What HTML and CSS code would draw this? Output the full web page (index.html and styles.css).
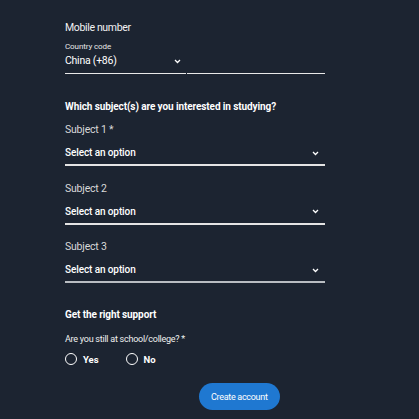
FILE: index.html
```html
<!DOCTYPE html>
<html lang="en">
<head>
    <meta charset="UTF-8">
    <meta name="viewport" content="width=device-width, initial-scale=1.0">
    <title>Create account</title>
    <link rel="stylesheet" href="styles.css">
</head>
<body>
    <form class="form">
        <div class="phone">
            <div class="field-title">Mobile number</div>
            <div class="phone-row">
                <div class="country">
                    <div class="small-label">Country code</div>
                    <div class="country-value">
                        <span>China (+86)</span>
                        <svg class="chev" width="7" height="5" viewBox="0 0 7 5"><path d="M1 1l2.5 2.5L6 1" fill="none" stroke="#fff" stroke-width="1.3"/></svg>
                    </div>
                </div>
                <div class="number"></div>
            </div>
        </div>

        <h2 class="section">Which subject(s) are you interested in studying?</h2>

        <div class="subject">
            <div class="label">Subject 1 *</div>
            <div class="select">
                <span>Select an option</span>
                <svg class="chev" width="7" height="5" viewBox="0 0 7 5"><path d="M1 1l2.5 2.5L6 1" fill="none" stroke="#fff" stroke-width="1.3"/></svg>
            </div>
        </div>
        <div class="subject">
            <div class="label">Subject 2</div>
            <div class="select">
                <span>Select an option</span>
                <svg class="chev" width="7" height="5" viewBox="0 0 7 5"><path d="M1 1l2.5 2.5L6 1" fill="none" stroke="#fff" stroke-width="1.3"/></svg>
            </div>
        </div>
        <div class="subject">
            <div class="label">Subject 3</div>
            <div class="select last">
                <span>Select an option</span>
                <svg class="chev" width="7" height="5" viewBox="0 0 7 5"><path d="M1 1l2.5 2.5L6 1" fill="none" stroke="#fff" stroke-width="1.3"/></svg>
            </div>
        </div>

        <h2 class="section support">Get the right support</h2>
        <div class="question">Are you still at school/college? *</div>
        <div class="radios">
            <label class="radio"><span class="circle"></span>Yes</label>
            <label class="radio"><span class="circle"></span>No</label>
        </div>

        <div class="actions">
            <button type="button" class="btn">Create account</button>
        </div>
    </form>
</body>
</html>
```

FILE: styles.css
```css
body {
    margin: 0;
    background-color: #1c2431;
    font-family: Roboto, 'Liberation Sans', Arial, sans-serif;
    color: #fff;
}
.form {
    width: 260px;
    padding: 21px 0 0 65px;
}
.field-title {
    font-size: 10.5px;
    line-height: 14px;
    letter-spacing: -0.35px;
    color: #f2f2f2;
}
.phone-row {
    display: flex;
    gap: 1px;
    margin-top: 6px;
}
.country {
    width: 121px;
    padding-bottom: 4px;
    border-bottom: 1.5px solid #e8e8e8;
}
.small-label {
    font-size: 8px;
    line-height: 11px;
    letter-spacing: -0.1px;
    color: #e6e6e6;
}
.country-value {
    display: flex;
    justify-content: space-between;
    align-items: center;
    font-size: 10.5px;
    line-height: 16px;
    letter-spacing: -0.25px;
    margin-top: 1px;
    padding-right: 5px;
}
.number {
    flex: 1;
    border-bottom: 1.5px solid #e8e8e8;
}
.section {
    margin: 26px 0 0;
    font-size: 10px;
    line-height: 14px;
    letter-spacing: -0.1px;
    font-weight: bold;
}
.subject {
    margin-top: 9px;
}
.subject + .subject {
    margin-top: 15.5px;
}
.label {
    font-size: 10.5px;
    line-height: 14px;
    letter-spacing: -0.2px;
    color: #d9d9d9;
}
.select {
    display: flex;
    justify-content: space-between;
    align-items: center;
    margin-top: 9px;
    padding: 0 6px 4px 0;
    font-size: 10px;
    line-height: 14px;
    letter-spacing: -0.1px;
    font-weight: 500;
    border-bottom: 2px solid #e4e4e4;
}
.select.last {
    border-bottom-color: #b9bdc2;
}
.support {
    margin-top: 25px;
}
.question {
    margin-top: 11px;
    font-size: 9px;
    line-height: 12px;
    letter-spacing: -0.25px;
    color: #f0f0f0;
}
.radios {
    display: flex;
    gap: 27px;
    margin-top: 8px;
}
.radio {
    display: flex;
    align-items: center;
    gap: 6px;
    font-size: 9.5px;
    font-weight: bold;
}
.circle {
    width: 10px;
    height: 10px;
    border: 1.5px solid #fff;
    border-radius: 50%;
}
.actions {
    display: flex;
    margin-top: 18px;
    padding-left: 134px;
}
.btn {
    background-color: #1f78d1;
    color: #fff;
    border: none;
    border-radius: 14px;
    height: 27px;
    padding: 0 12px;
    font-family: inherit;
    font-size: 9px;
    letter-spacing: -0.3px;
}
```
